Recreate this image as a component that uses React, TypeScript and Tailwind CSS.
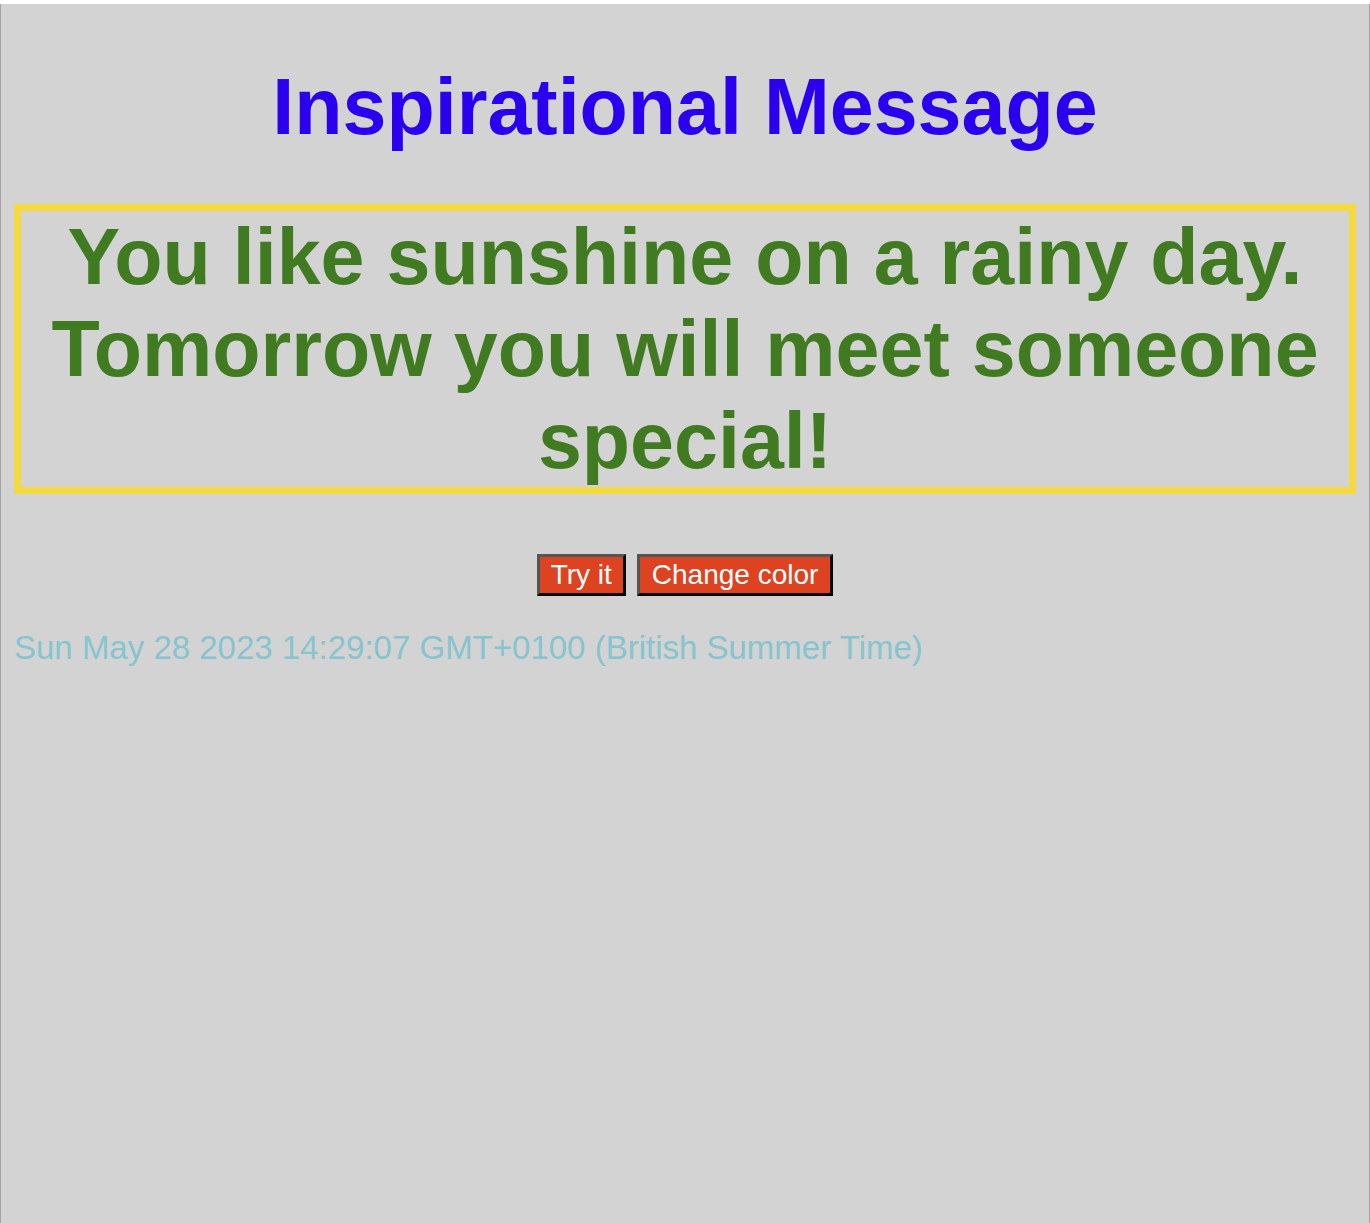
import React from "react";

export default function App() {
  return (
    <div className="min-h-[1223px] bg-white pt-[4px]" style={{ fontFamily: '"Liberation Sans", Arial, sans-serif' }}>
      <div className="h-[1219px] bg-[#d3d3d3] border-l border-r border-[#a3a3a3] px-[13px] overflow-hidden">
        <h1 className="mt-[57px] mb-[52px] text-center text-[79px] font-bold leading-[91px] text-[#2a00ef]">
          Inspirational Message
        </h1>
        <div className="border-[7px] border-[#f4da3e] text-center text-[79px] font-bold leading-[92px] text-[#417b21]">
          You like sunshine on a rainy day. Tomorrow you will meet someone special!
        </div>
        <div className="mt-[60px] flex justify-center gap-[11px]">
          <button className="bg-[#de4321] text-white text-[28px] leading-[32px] px-[11px] py-[2px] border-[3px] border-t-[#555555] border-l-[#555555] border-b-black border-r-black">
            Try it
          </button>
          <button className="bg-[#de4321] text-white text-[28px] leading-[32px] px-[12px] py-[2px] border-[3px] border-t-[#555555] border-l-[#555555] border-b-black border-r-black">
            Change color
          </button>
        </div>
        <p className="mt-[33px] text-[33px] leading-[38px] text-[#86c4cf]">
          Sun May 28 2023 14:29:07 GMT+0100 (British Summer Time)
        </p>
      </div>
    </div>
  );
}
